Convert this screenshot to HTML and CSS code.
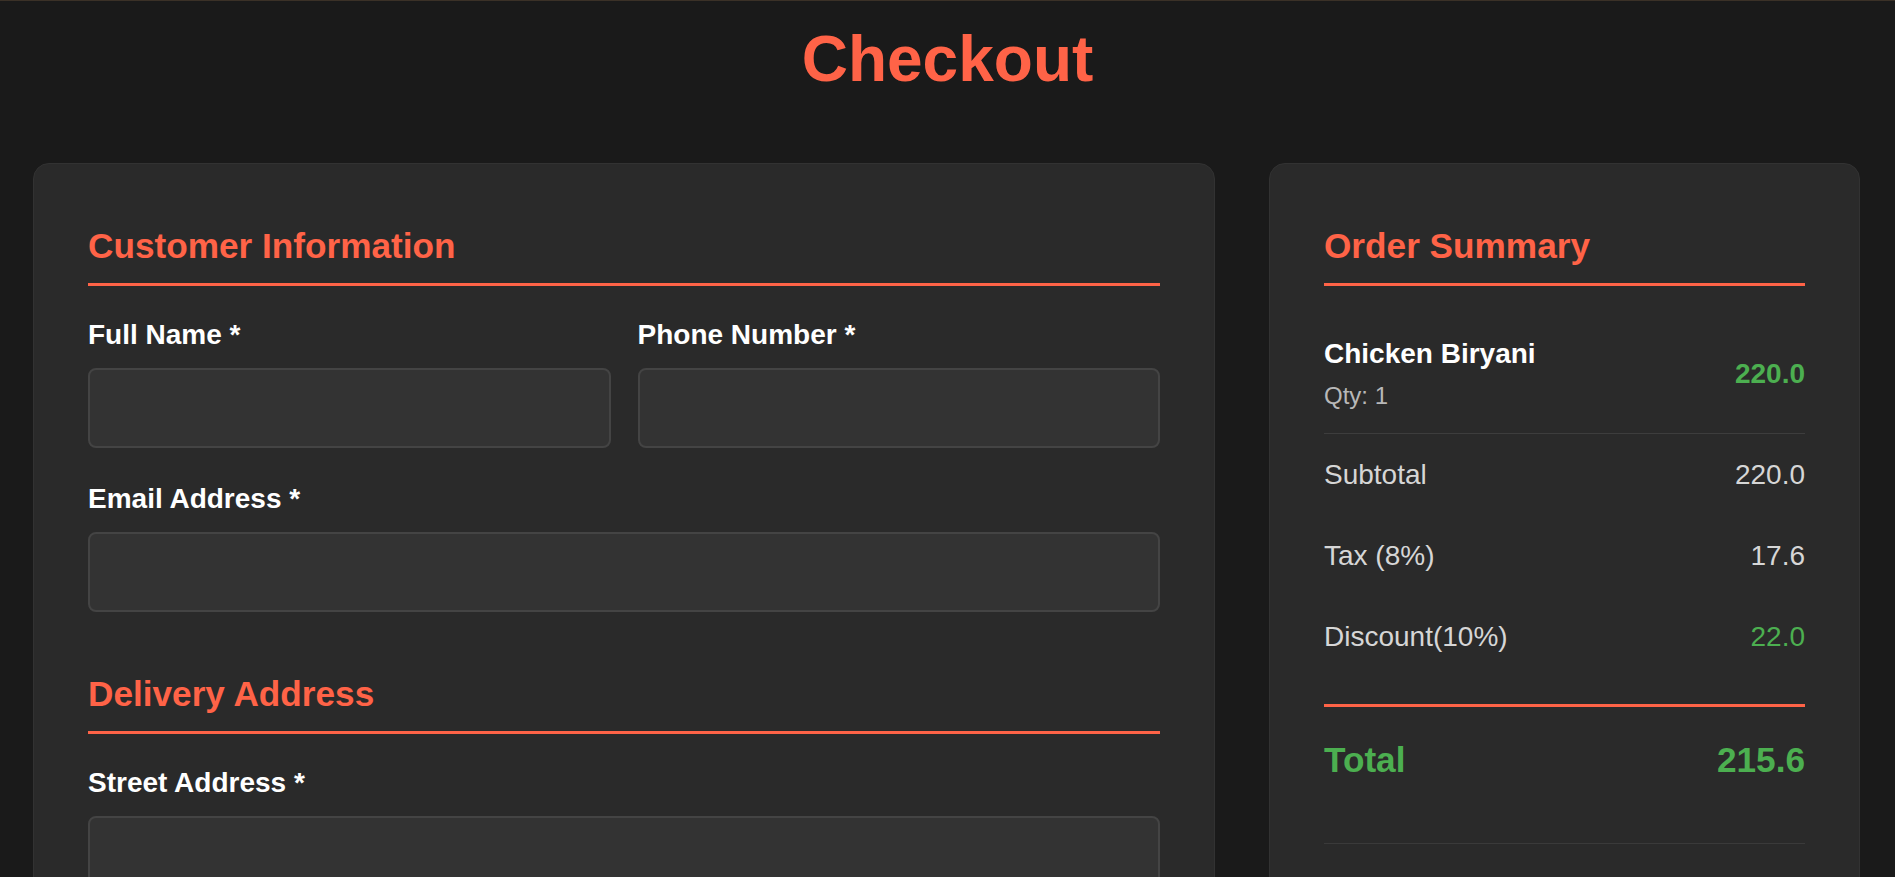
FILE: index.html
```html
<!DOCTYPE html>
<html lang="en">
<head>
<meta charset="utf-8">
<title>Checkout</title>
<link rel="stylesheet" href="styles.css">
</head>
<body>
  <h1 class="page-title">Checkout</h1>
  <main class="checkout">
    <section class="card form-card">
      <div class="form-section">
        <h2 class="section-title">Customer Information</h2>
        <div class="form-row">
          <div class="form-group">
            <label class="field-label" for="name">Full Name *</label>
            <input class="field-input" id="name" type="text">
          </div>
          <div class="form-group">
            <label class="field-label" for="phone">Phone Number *</label>
            <input class="field-input" id="phone" type="tel">
          </div>
        </div>
        <div class="form-group">
          <label class="field-label" for="email">Email Address *</label>
          <input class="field-input" id="email" type="email">
        </div>
      </div>
      <div class="form-section">
        <h2 class="section-title">Delivery Address</h2>
        <div class="form-group">
          <label class="field-label" for="street">Street Address *</label>
          <textarea class="field-input field-area" id="street"></textarea>
        </div>
      </div>
    </section>

    <aside class="card summary-card">
      <h2 class="section-title">Order Summary</h2>
      <div class="order-item">
        <div class="item-info">
          <div class="item-name">Chicken Biryani</div>
          <div class="item-qty">Qty: 1</div>
        </div>
        <div class="item-price">220.0</div>
      </div>
      <div class="summary-rows">
        <div class="summary-row"><span>Subtotal</span><span>220.0</span></div>
        <div class="summary-row"><span>Tax (8%)</span><span>17.6</span></div>
        <div class="summary-row"><span>Discount(10%)</span><span class="green">22.0</span></div>
      </div>
      <div class="summary-total"><span>Total</span><span>215.6</span></div>
      <div class="summary-footer"></div>
    </aside>
  </main>
</body>
</html>
```

FILE: styles.css
```css
* { box-sizing: border-box; }

html, body {
  background: #1a1a1a;
}

body {
  margin: 0;
  border-top: 1px solid #3b3127;
  font-family: "Liberation Sans", Arial, sans-serif;
  color: #ffffff;
}

.page-title {
  margin: 21px 0 67px;
  text-align: center;
  font-size: 64px;
  font-weight: 700;
  line-height: 74px;
  color: #ff6347;
}

.checkout {
  display: grid;
  grid-template-columns: 2fr 1fr;
  gap: 54px;
  padding: 0 35px 40px 33px;
}

.card {
  display: flow-root;
  background: #2a2a2a;
  border: 1px solid #323232;
  border-radius: 16px;
  padding: 54px;
}

.form-section {
  display: flow-root;
}

.form-section + .form-section {
  margin-top: 20px;
}

.section-title {
  margin: 8px 0 32px;
  padding-bottom: 17px;
  border-bottom: 3px solid #ff6347;
  font-size: 35.2px;
  line-height: 40px;
  font-weight: 700;
  color: #ff6347;
}

.form-row {
  display: grid;
  grid-template-columns: 1fr 1fr;
  gap: 27px;
}

.form-group {
  margin-bottom: 34px;
}

.field-label {
  display: block;
  margin-bottom: 17px;
  font-size: 28px;
  line-height: 33px;
  font-weight: 700;
  color: #ffffff;
}

.field-input {
  display: block;
  width: 100%;
  height: 80px;
  background: #333333;
  border: 2px solid #444444;
  border-radius: 8px;
  color: #ffffff;
  font-family: inherit;
  font-size: 26px;
  padding: 0 20px;
  outline: none;
}

.field-area {
  height: 160px;
  resize: vertical;
}

.order-item {
  display: flex;
  justify-content: space-between;
  align-items: center;
  padding: 20px 0 23px;
  border-bottom: 1px solid #3d3d3d;
}

.item-name {
  font-size: 28px;
  line-height: 32px;
  font-weight: 700;
  color: #ffffff;
}

.item-qty {
  margin-top: 12px;
  font-size: 24px;
  line-height: 28px;
  color: #b8b8b8;
}

.item-price {
  font-size: 28px;
  line-height: 32px;
  font-weight: 700;
  color: #4caf50;
}

.summary-row {
  display: flex;
  justify-content: space-between;
  padding: 24px 0;
  font-size: 28px;
  line-height: 33px;
  color: #d6d6d6;
}

.green {
  color: #4caf50;
}

.summary-total {
  display: flex;
  justify-content: space-between;
  margin-top: 27px;
  padding: 33px 0;
  border-top: 3px solid #ff6347;
  font-size: 35.2px;
  line-height: 40px;
  font-weight: 700;
  color: #4caf50;
}

.summary-footer {
  margin-top: 30px;
  border-top: 1px solid #3a3a3a;
  height: 60px;
}
```
